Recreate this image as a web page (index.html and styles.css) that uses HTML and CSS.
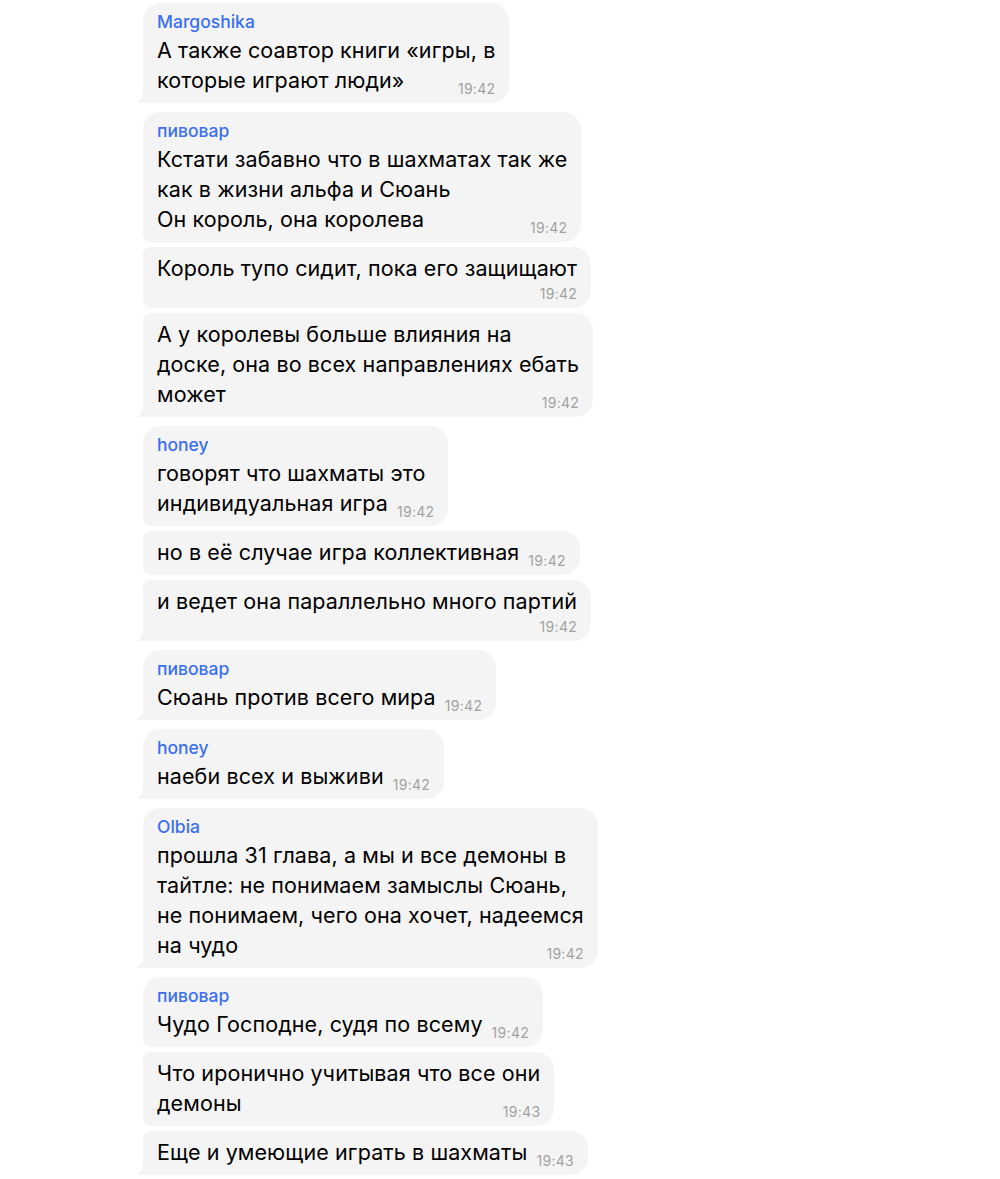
FILE: index.html
```html
<!DOCTYPE html>
<html lang="ru">
<head>
  <meta charset="UTF-8">
  <meta name="viewport" content="width=device-width, initial-scale=1.0">
  <title>Чат</title>
  <link rel="stylesheet" href="styles.css">
</head>
<body>
  <div class="chat">

    <div class="group">
      <div class="msg tail">
        <div class="name">Margoshika</div>
        <p class="text">А также соавтор книги «игры, в</p>
        <div class="last"><span>которые играют люди»</span><span class="time">19:42</span></div>
      </div>
    </div>

    <div class="group">
      <div class="msg">
        <div class="name">пивовар</div>
        <p class="text">Кстати забавно что в шахматах так же<br>как в жизни альфа и Сюань</p>
        <div class="last"><span>Он король, она королева</span><span class="time">19:42</span></div>
      </div>
      <div class="msg">
        <p class="text">Король тупо сидит, пока его защищают</p>
        <div class="time own">19:42</div>
      </div>
      <div class="msg tail">
        <p class="text">А у королевы больше влияния на<br>доске, она во всех направлениях ебать</p>
        <div class="last"><span>может</span><span class="time">19:42</span></div>
      </div>
    </div>

    <div class="group">
      <div class="msg">
        <div class="name">honey</div>
        <p class="text">говорят что шахматы это</p>
        <div class="last"><span>индивидуальная игра</span><span class="time">19:42</span></div>
      </div>
      <div class="msg">
        <div class="last"><span>но в её случае игра коллективная</span><span class="time">19:42</span></div>
      </div>
      <div class="msg tail">
        <p class="text">и ведет она параллельно много партий</p>
        <div class="time own">19:42</div>
      </div>
    </div>

    <div class="group">
      <div class="msg tail">
        <div class="name">пивовар</div>
        <div class="last"><span>Сюань против всего мира</span><span class="time">19:42</span></div>
      </div>
    </div>

    <div class="group">
      <div class="msg tail">
        <div class="name">honey</div>
        <div class="last"><span>наеби всех и выживи</span><span class="time">19:42</span></div>
      </div>
    </div>

    <div class="group">
      <div class="msg tail">
        <div class="name">Olbia</div>
        <p class="text">прошла 31 глава, а мы и все демоны в<br>тайтле: не понимаем замыслы Сюань,<br>не понимаем, чего она хочет, надеемся</p>
        <div class="last"><span>на чудо</span><span class="time">19:42</span></div>
      </div>
    </div>

    <div class="group">
      <div class="msg">
        <div class="name">пивовар</div>
        <div class="last"><span>Чудо Господне, судя по всему</span><span class="time">19:42</span></div>
      </div>
      <div class="msg">
        <p class="text">Что иронично учитывая что все они</p>
        <div class="last"><span>демоны</span><span class="time">19:43</span></div>
      </div>
      <div class="msg tail">
        <div class="last"><span>Еще и умеющие играть в шахматы</span><span class="time">19:43</span></div>
      </div>
    </div>

  </div>
</body>
</html>
```

FILE: styles.css
```css
:root {
  --bubble: #f4f4f4;
  --text: #000;
  --name: #3a6ff2;
  --time: #a2a2a2;
  --page: #ffffff;
}

body {
  margin: 0;
  background: var(--page);
  font-family: Inter, "Noto Sans", sans-serif;
  color: var(--text);
}

.chat {
  display: flex;
  flex-direction: column;
  gap: 9px;
  padding: 3px 0 0 143px;
}

.group {
  display: flex;
  flex-direction: column;
  align-items: flex-start;
  gap: 5px;
}

.msg {
  position: relative;
  background: var(--bubble);
  padding: 6px 14px 8px;
  border-radius: 18px 18px 18px 8px;
  white-space: nowrap;
  font-size: 21.5px;
  letter-spacing: 0.1px;
  line-height: 30px;
}

.group .msg + .msg {
  border-top-left-radius: 8px;
}

.msg.tail {
  border-bottom-left-radius: 4px;
}

/* small curl at the bottom left of the last bubble */
.msg.tail::before {
  content: "";
  position: absolute;
  left: -6px;
  bottom: 0;
  width: 16px;
  height: 16px;
  background: var(--bubble);
  border-bottom-right-radius: 12px 10px;
}

.msg.tail::after {
  content: "";
  position: absolute;
  left: -16px;
  bottom: 0;
  width: 16px;
  height: 16px;
  background: var(--page);
  border-bottom-right-radius: 9px;
}

.name {
  font-size: 17.5px;
  font-weight: 500;
  letter-spacing: 0;
  line-height: 26px;
  color: var(--name);
}

.text {
  margin: 0;
}

.last {
  display: flex;
  justify-content: space-between;
  align-items: flex-end;
  gap: 9px;
}

.time {
  font-size: 14px;
  letter-spacing: 0.3px;
  line-height: 16px;
  color: var(--time);
  margin-bottom: -2px;
}

.time.own {
  text-align: right;
  margin: 5px 0 0;
  line-height: 12px;
}
```
